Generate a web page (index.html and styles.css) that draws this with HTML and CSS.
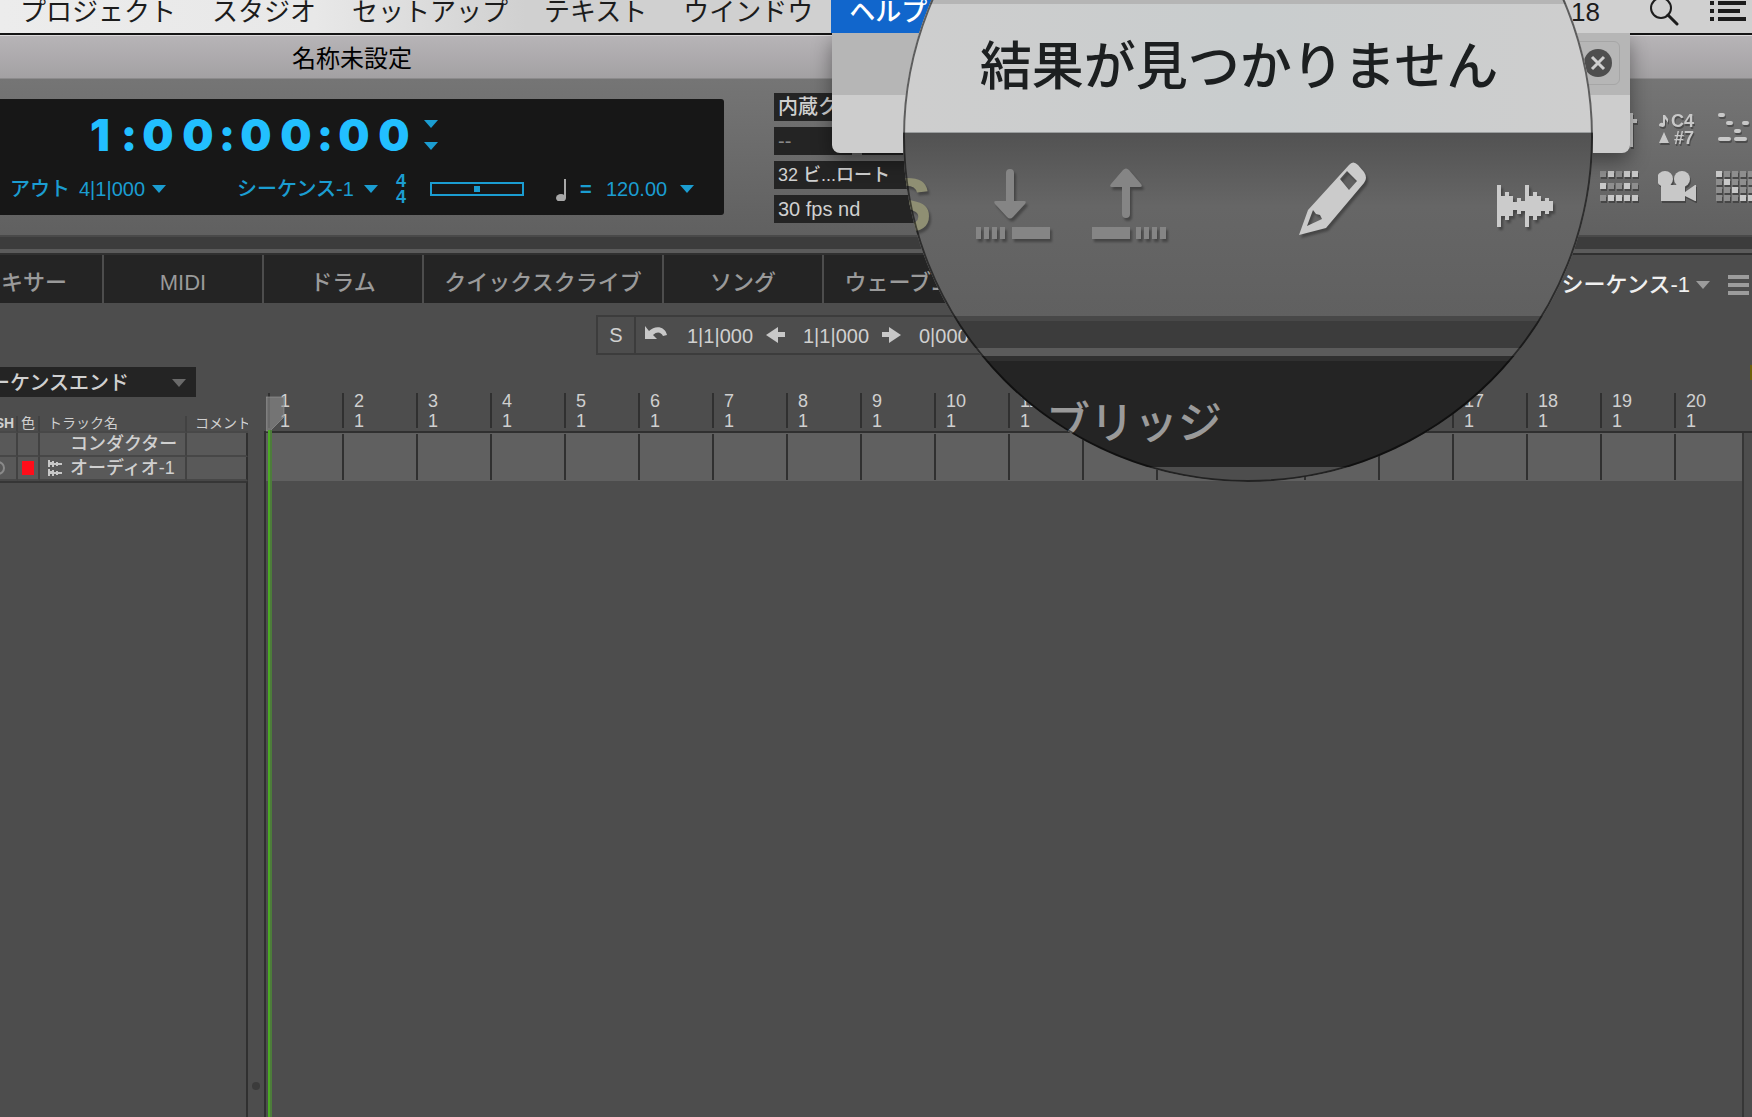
FILE: index.html
```html
<!DOCTYPE html>
<html lang="ja">
<head>
<meta charset="utf-8">
<title>名称未設定</title>
<link rel="stylesheet" href="styles.css">
</head>
<body>
<header class="menubar">
  <nav class="menus">
    <a href="#">プロジェクト</a><a href="#">スタジオ</a><a href="#">セットアップ</a><a href="#">テキスト</a><a href="#">ウインドウ</a><a href="#" class="open">ヘルプ</a>
  </nav>
  <div class="status">
    <span class="clock">18</span>
    <svg class="search-icon" width="30" height="28" viewBox="0 0 30 28" fill="none" stroke="#1c1c1c" stroke-width="2"><circle cx="12" cy="8" r="10"/><path d="M19 15l9 9" stroke-width="3" stroke-linecap="round"/></svg>
    <svg width="36" height="22" viewBox="0 0 36 22" fill="#1c1c1c"><path d="M0 1h4v4H0zM8 1h28v4H8zM0 9h4v4H0zM8 9h22v4H8zM0 17h4v4H0zM8 17h28v4H8z"/></svg>
  </div>
</header>

<div class="titlebar"><h1>名称未設定</h1></div>

<section class="panel">
  <div class="counter">
    <div class="time">
      <span>1</span><i>:</i><span>0</span><span>0</span><i>:</i><span>0</span><span>0</span><i>:</i><span>0</span><span>0</span>
      <div class="steps"><button class="tri" aria-label="カウンター表示"></button><button class="tri" aria-label="サブカウンター表示"></button></div>
    </div>
    <div class="transport">
      <span class="out-label">アウト</span><span class="out-value">4|1|000</span><button class="tri" aria-label="アウト"></button>
      <span class="seq">シーケンス-1</span><button class="tri" aria-label="シーケンス"></button>
      <span class="meter"><b>4</b><b>4</b></span>
      <input class="tempo" type="range" min="0" max="100" value="50" aria-label="テンポ">
      <svg class="note" width="12" height="24" viewBox="0 0 12 24" fill="#a8a8a8"><ellipse cx="5" cy="21" rx="5" ry="4"/><path d="M8 2h2v19H8z"/></svg>
      <span class="eq">=</span><span class="bpm">120.00</span><button class="tri" aria-label="テンポソース"></button>
    </div>
  </div>
  <div class="info">
    <select aria-label="クロック"><option>内蔵クロック</option></select>
    <div class="split"><select class="dim" aria-label="サンプルレート"><option>--</option></select><select class="dim wide" aria-label="同期"><option></option></select></div>
    <select class="small" aria-label="フォーマット"><option>32 ビ...ロート</option></select>
    <select aria-label="フレームレート"><option>30 fps nd</option></select>
  </div>
  <div class="tools">
    <svg width="40" height="36" viewBox="0 0 40 36"><path d="M30 1h3v6h4v4h-4v24h-3zM4 8h20v3H4z"/></svg>
    <svg width="40" height="36" viewBox="0 0 40 36"><text x="13" y="15">C4</text><text x="16" y="32">#7</text><path d="M5 3h2l3 4v4l-2-3-1-1v6a3 2 0 1 1-2-2zM1 31l5-11 5 11z"/></svg>
    <svg width="36" height="36" viewBox="0 0 36 36"><path d="M4 3h3M12 11h3M28 11h3M20 19h3M4 27h9M20 27h9" stroke="#c8c8c8" stroke-width="4" stroke-linecap="round"/></svg>
    <svg width="40" height="36" viewBox="0 0 40 36"><g fill="#8e8e8e"><path d="M0 1h6v6H0zM16 1h6v6h-6zM8 13h6v6H8zM16 13h6v6h-6zM32 13h6v6h-6zM0 25h6v6H0z"/></g><path d="M8 1h6v6H8zM24 1h6v6h-6zM32 1h6v6h-6zM0 13h6v6H0zM24 13h6v6h-6zM8 25h6v6H8zM16 25h6v6h-6zM24 25h6v6h-6zM32 25h6v6h-6z"/></svg>
    <svg width="40" height="36" viewBox="0 0 40 36"><circle cx="7" cy="9" r="8"/><circle cx="24" cy="9" r="8"/><path d="M3 15h24v7l10-7h1v16h-1l-10-5v5H3z"/></svg>
    <svg width="36" height="36" viewBox="0 0 36 36"><g fill="#8e8e8e"><path d="M8 1h6v6H8zM16 1h6v6h-6zM24 1h6v6h-6zM32 1h4v6h-4zM0 9h6v6H0zM16 9h6v6h-6zM24 9h6v6h-6zM32 9h4v6h-4zM0 17h6v6H0zM8 17h6v6H8zM24 17h6v6h-6zM32 17h4v6h-4zM0 25h6v6H0zM8 25h6v6H8zM16 25h6v6h-6z"/></g><path d="M0 1h6v6H0zM8 9h6v6H8zM16 17h6v6h-6zM24 25h6v6h-6zM32 25h4v6h-4z"/></svg>
  </div>
</section>
<div class="divider"></div>

<div class="tabs">
  <button class="cut">ミキサー</button><button>MIDI</button><button>ドラム</button><button class="long">クイックスクライブ</button><button>ソング</button><button class="last">ウェーブエディタ</button>
  <div class="sequence">
    <button>シーケンス-1<span class="tri"></span></button>
    <button class="burger" aria-label="メニュー"><svg width="21" height="20" viewBox="0 0 21 20" fill="#9c9c9c"><path d="M0 0h21v4H0zM0 8h21v4H0zM0 16h21v4H0z"/></svg></button>
  </div>
</div>

<div class="selection">
  <button class="snap">S</button>
  <div class="range">
    <svg class="undo" width="22" height="14" viewBox="0 0 22 14"><path d="M0 0v13h12L8 9c4-4 8-3 10 1l4-1C20 0 10-1 4 5z"/></svg>
    <span>1|1|000</span>
    <svg width="19" height="16" viewBox="0 0 19 16"><path d="M0 8l12-8v5h7v5h-7v6z"/></svg>
    <span>1|1|000</span>
    <svg width="19" height="16" viewBox="0 0 19 16"><path d="M19 8L7 0v5H0v5h7v6z"/></svg>
    <span>0|000</span>
  </div>
</div>

<main class="workspace">
  <section class="tracks">
    <select class="end" aria-label="表示"><option>シーケンスエンド</option></select>
    <i class="arrow"></i>
    <table>
      <colgroup><col class="c1"><col class="c2"><col class="c3"><col></colgroup>
      <thead><tr><th class="sh"><b>SH</b></th><th>色</th><th class="left">トラック名</th><th class="left">コメント</th></tr></thead>
      <tbody>
        <tr><td></td><td></td><td class="name">コンダクター</td><td></td></tr>
        <tr><td class="rec"><svg width="16" height="16" viewBox="0 0 16 16" fill="none" stroke="#8a8a8a" stroke-width="2"><circle cx="-2" cy="8" r="6"/></svg></td><td><span class="swatch"></span></td>
          <td class="name audio"><svg width="15" height="18" viewBox="0 0 15 18" fill="#c8c8c8"><path d="M0 1h2v2h2V2h2v2h2V3h2v1h4v2h-4v1H8V6H6v2H4V6H2v2H0zM0 10h2v2h2v-1h2v2h2v-1h2v1h4v2h-4v1H8v-1H6v2H4v-2H2v2H0z"/></svg>オーディオ-1</td><td></td></tr>
      </tbody>
    </table>
    <div class="tracks-rest"></div>
  </section>
  <div class="splitter"><i></i></div>
  <section class="timeline">
    <div class="ruler">
      <span>1<br>1</span><span>2<br>1</span><span>3<br>1</span><span>4<br>1</span><span>5<br>1</span><span>6<br>1</span><span>7<br>1</span><span>8<br>1</span><span>9<br>1</span><span>10<br>1</span><span>11<br>1</span><span>12<br>1</span><span>13<br>1</span><span>14<br>1</span><span>15<br>1</span><span>16<br>1</span><span>17<br>1</span><span>18<br>1</span><span>19<br>1</span><span>20<br>1</span>
    </div>
    <div class="lanes"><div class="lane"></div></div>
    <svg class="marker" width="20" height="36" viewBox="0 0 20 36"><path d="M0 1h18v20L4 35H0z" fill="#909090" fill-opacity=".6" stroke="#999" stroke-opacity=".6"/></svg>
    <div class="playhead"></div>
    <i class="flag"></i>
  </section>
</main>

<div class="help">
  <div class="help-search"><div class="field"><input type="text" aria-label="検索"><button class="clear" aria-label="消去"><svg width="28" height="28" viewBox="0 0 28 28"><circle cx="14" cy="14" r="14" fill="#4e4e4e"/><path d="M8 8l12 12M20 8L8 20" stroke="#cfcfcf" stroke-width="3"/></svg></button></div></div>
</div>

<div class="lens">
  <div class="lens-top"></div>
  <div class="lens-result">結果が見つかりません</div>
  <div class="lens-tools">
    <span class="solo"><b>S</b></span>
    <svg width="76" height="74" viewBox="0 0 76 74" fill="#858585"><path d="M30 5q0-4 4-4t4 4v28h10q3 0 1 3L37 49q-3 3-6 0L19 36q-2-3 1-3h10zM0 59h5v12H0zM8 59h5v12H8zM16 59h5v12h-5zM24 59h5v12h-5zM36 59h38v12H36z"/></svg>
    <svg width="76" height="74" viewBox="0 0 76 74" fill="#858585"><path d="M30 46q0 4 4 4t4-4V19h10q3 0 1-3L37 2q-3-3-6 0L19 16q-2 3 1 3h10zM0 59h38v12H0zM44 59h5v12h-5zM52 59h5v12h-5zM60 59h5v12h-5zM68 59h6v12h-6z"/></svg>
    <svg class="pencil" width="68" height="88" viewBox="0 0 68 88" fill="#cbcbcb"><path fill-rule="evenodd" d="M0 74L9 49 50 4q4-5 9 0l6 7q4 6 0 11L27 67zM48 10l-7 8 9 11 8-9zM14 49L8 65l15-7-2-4-4-1z"/></svg>
    <svg class="wave" width="60" height="44" viewBox="0 0 60 44" fill="#cbcbcb"><path d="M1 2h4v42H1zM5 13h4v20H5zM9 9h4v28H9zM13 13h4v20h-4zM17 19h4v8h-4zM21 15h4v16h-4zM25 18h4v10h-4zM29 2h4v42h-4zM33 13h4v20h-4zM37 9h4v28h-4zM41 13h4v20h-4zM45 18h4v10h-4zM49 15h4v16h-4zM53 18h4v10h-4z"/></svg>
  </div>
  <div class="lens-divider"></div>
  <div class="lens-tab">ブリッジ</div>
</div>
</body>
</html>
```
FILE: styles.css
```css
* { box-sizing: border-box; }

body {
  margin: 0;
  min-height: 100vh;
  display: flex;
  flex-direction: column;
  position: relative;
  overflow: hidden;
  background: #4d4d4d;
  color: #d0d0d0;
  font: 500 20px/24px "Liberation Sans", "Noto Sans CJK JP", sans-serif;
}

button, select, input {
  margin: 0;
  padding: 0;
  border: 0;
  border-radius: 0;
  background: none;
  color: inherit;
  font: inherit;
  appearance: none;
}

svg { display: block; flex: none; }

.tri {
  flex: none;
  width: 14px;
  height: 8px;
  background: #1b9dd1;
  clip-path: polygon(0 0, 100% 0, 50% 100%);
}

/* Menu bar */
.menubar {
  display: flex;
  justify-content: space-between;
  height: 35px;
  border-bottom: 2px solid #141414;
  background: linear-gradient(90deg, #ececec 0, #e8e8e8 18%, #d0d0d0 30%, #d0d0d0 100%);
  color: #1c1c1c;
  font-size: 26px;
  font-weight: 400;
  line-height: 24px;
}
.menus { display: flex; padding-left: 2px; }
.menus a {
  padding: 0 18px;
  height: 33px;
  color: inherit;
  text-decoration: none;
  white-space: nowrap;
}
.menus .open { background: #1166cc; color: #fff; font-weight: 500; }
.status { display: flex; padding-right: 6px; }
.clock { margin-right: 49px; }
.search-icon { margin-right: 31px; }

.titlebar {
  height: 44px;
  padding-left: 292px;
  border-top: 1px solid #dcdadc;
  border-bottom: 1px solid #8c8b8c;
  background: linear-gradient(#b7b4b7, #a3a1a3);
}
.titlebar h1 {
  margin: 0;
  color: #000;
  font-size: 24px;
  font-weight: 400;
  line-height: 46px;
}

/* Control panel */
.panel {
  display: flex;
  align-items: center;
  height: 156px;
  background: linear-gradient(#757575, #606060);
}
.counter {
  width: 724px;
  height: 116px;
  padding-top: 16px;
  border-radius: 0 3px 3px 0;
  background: #171717;
  color: #1b9dd1;
}
.time {
  display: flex;
  align-items: center;
  height: 40px;
  padding-left: 80px;
  color: #22bfff;
  font: 900 44px/40px Inter, "Liberation Sans", sans-serif;
}
.time span { width: 40px; text-align: center; }
.time i { width: 18px; font-style: normal; text-align: center; }
.steps {
  display: flex;
  flex-direction: column;
  gap: 14px;
  margin-left: 10px;
}
.transport {
  display: flex;
  align-items: center;
  height: 40px;
  margin-top: 14px;
  padding-left: 10px;
  white-space: nowrap;
}
.out-label { width: 69px; }
.out-value { width: 73px; }
.seq { width: 127px; margin-left: 71px; }
.meter {
  display: flex;
  flex-direction: column;
  width: 34px;
  margin-left: 18px;
  font-size: 18px;
  line-height: 16px;
}
.tempo { width: 94px; height: 14px; border: 2px solid #1b9dd1; }
.tempo::-webkit-slider-thumb { appearance: none; width: 6px; height: 6px; background: #1b9dd1; }
.note { margin-left: 32px; }
.eq { width: 26px; margin-left: 12px; font-weight: 700; }
.bpm { width: 74px; }

.info {
  display: flex;
  flex-direction: column;
  gap: 6px;
  width: 180px;
  margin-left: 50px;
  padding-top: 2px;
}
.info select {
  width: 100%;
  height: 28px;
  padding-left: 4px;
  background: #242424;
}
.info .small { font-size: 18px; }
.split { display: flex; gap: 10px; }
.split .dim { width: 78px; color: #8a8a8a; }
.split .wide { width: 92px; }

.tools {
  display: grid;
  grid-template-columns: 40px 40px 36px;
  gap: 22px 18px;
  margin-left: auto;
  padding-top: 4px;
  fill: #c8c8c8;
  font: 700 18px/18px "Liberation Sans", sans-serif;
}
.tools svg { filter: drop-shadow(1px 2px 0 rgba(0, 0, 0, .3)); }

.divider {
  height: 20px;
  border-top: 2px solid #494949;
  border-bottom: 2px solid #303030;
  background: linear-gradient(#3c3c3c 12px, #5b5b5b 12px);
}

/* Tabs */
.tabs { display: flex; height: 48px; font-size: 22px; }
.tabs > button {
  flex: none;
  width: 160px;
  padding-top: 8px;
  border-right: 2px solid #4d4d4d;
  background: #242424;
  color: #9a9a9a;
  white-space: nowrap;
}
.tabs > .cut {
  display: flex;
  align-items: center;
  justify-content: flex-end;
  width: 104px;
  padding-right: 35px;
  overflow: hidden;
}
.tabs > .long { width: 240px; }
.tabs > .last { width: 216px; }
.sequence {
  display: flex;
  align-items: center;
  gap: 18px;
  margin-left: auto;
  padding: 12px 3px 0 0;
  color: #f0f0f0;
}
.sequence button { display: flex; align-items: center; gap: 6px; }
.sequence .tri { background: #9c9c9c; }

.selection {
  display: flex;
  width: 500px;
  height: 40px;
  margin: 12px 0 0 596px;
  border: 2px solid #3c3c3c;
  fill: #c8c8c8;
}
.snap { width: 38px; border-right: 2px solid #3c3c3c; }
.range { display: flex; align-items: center; padding-left: 9px; }
.range span { width: 66px; margin: 2px 13px 0 18px; }
.range .undo { margin: 0 2px 4px 0; }

/* Workspace */
.workspace { display: flex; flex: 1; min-height: 0; }
.tracks {
  position: relative;
  display: flex;
  flex-direction: column;
  width: 248px;
  padding-top: 12px;
  overflow: hidden;
}
.end {
  width: 236px;
  height: 30px;
  margin: 0 0 19px -40px;
  padding: 2px 0 0 10px;
  background: #242424;
}
.arrow {
  position: absolute;
  top: 24px;
  left: 172px;
  width: 14px;
  height: 8px;
  background: #6a6a6a;
  clip-path: polygon(0 0, 100% 0, 50% 100%);
}
table {
  width: 248px;
  table-layout: fixed;
  border-collapse: separate;
  border-spacing: 0;
}
.c1 { width: 18px; }
.c2 { width: 22px; }
.c3 { width: 147px; }
th, td { padding: 0; white-space: nowrap; border-right: 2px solid #424242; overflow: hidden; }
th { height: 17px; font-size: 14px; line-height: 15px; font-weight: 400; border-bottom: 2px solid #484848; }
th:last-child { border-right: 0; }
th.left { padding-left: 8px; text-align: left; }
.sh b { display: block; margin-left: -7px; }
td { height: 24px; border-bottom: 2px solid #474747; background: #595959; font-size: 18px; line-height: 22px; }
td:last-child { border-right-color: #303030; }
.name { padding-left: 30px; }
.audio { display: flex; align-items: center; gap: 7px; padding-left: 8px; }
.swatch { display: block; width: 12px; height: 14px; margin: 0 auto; background: #ff0d1a; }
.tracks-rest { flex: 1; border-right: 2px solid #303030; border-top: 2px solid #363636; }

.splitter {
  display: flex;
  align-items: flex-end;
  justify-content: center;
  width: 18px;
  margin-top: 76px;
  padding-bottom: 27px;
  border-right: 2px solid #303030;
}
.splitter i { width: 8px; height: 8px; border-radius: 50%; background: #3b3b3b; }

.timeline {
  position: relative;
  display: flex;
  flex: 1;
  flex-direction: column;
  min-width: 0;
  padding-top: 38px;
}
.ruler {
  display: flex;
  height: 40px;
  padding: 0 0 3px 2px;
  border-bottom: 2px solid #303030;
  overflow: hidden;
  font-size: 18px;
  line-height: 20px;
}
.ruler span {
  flex: none;
  width: 74px;
  padding-left: 10px;
  margin-top: -2px;
  border-left: 2px solid #303030;
}
.lanes { flex: 1; margin-right: 8px; border-right: 2px solid #363636; }
.lane {
  height: 48px;
  border: solid #606060;
  border-width: 1px 0 1px 2px;
  background: repeating-linear-gradient(90deg, #303030 0 2px, #606060 2px 74px);
}
.marker { position: absolute; top: 41px; left: 0; }
.playhead {
  position: absolute;
  top: 75px;
  bottom: 0;
  left: 2px;
  width: 4px;
  background: linear-gradient(90deg, #4caa24 50%, #4d7c3b 50%);
}
.flag { position: absolute; top: 10px; right: 0; width: 2px; height: 15px; background: #6e5f0c; }

/* Help menu */
.help {
  position: absolute;
  top: 33px;
  left: 832px;
  width: 798px;
  height: 120px;
  border-radius: 0 0 8px 8px;
  background: #cdcdcd;
  box-shadow: 0 8px 20px rgba(0, 0, 0, .4);
  clip-path: inset(0 -40px -40px -40px);
}
.help-search { padding: 8px 10px 10px; background: #b6b6b6; }
.field {
  display: flex;
  align-items: center;
  height: 44px;
  margin-left: 100px;
  padding-right: 7px;
  border: 1px solid #a6a6a6;
  border-radius: 6px;
}
.field input { flex: 1; }

/* Magnifier */
.lens {
  position: absolute;
  top: -208px;
  left: 903px;
  width: 690px;
  height: 690px;
  border-radius: 50%;
  overflow: hidden;
  background: #4d4d4d;
}
.lens::after {
  content: "";
  position: absolute;
  inset: 0;
  border: 2px solid rgba(0, 0, 0, .55);
  border-radius: 50%;
}
.lens-top { height: 212px; background: #b5b5b5; }
.lens-result {
  height: 129px;
  padding-right: 18px;
  border-bottom: 1px solid #9a9d9e;
  background: linear-gradient(90deg, #cecece, #c9cdce 50%, #cecece);
  color: #1c1f20;
  font-size: 52px;
  line-height: 126px;
  text-align: center;
}
.lens-tools {
  display: flex;
  align-items: center;
  gap: 40px;
  height: 183px;
  padding-bottom: 40px;
  background: linear-gradient(#525252, #666 40%, #606060);
}
.lens-tools svg, .solo b { filter: drop-shadow(2px 3px 1px rgba(0, 0, 0, .3)); }
.solo { display: flex; justify-content: flex-end; width: 33px; padding-right: 4px; }
.solo b { color: #8f8f73; font-size: 76px; line-height: 76px; }
.pencil { margin-left: 91px; }
.wave { margin-left: 89px; }
.lens-divider {
  height: 45px;
  border-top: 5px solid #484848;
  border-bottom: 5px solid #303030;
  background: linear-gradient(#3c3c3c 27px, #5b5b5b 27px);
}
.lens-tab {
  height: 106px;
  padding-left: 143px;
  background: #242424;
  color: #9a9a9a;
  font-size: 44px;
  line-height: 126px;
}
```
